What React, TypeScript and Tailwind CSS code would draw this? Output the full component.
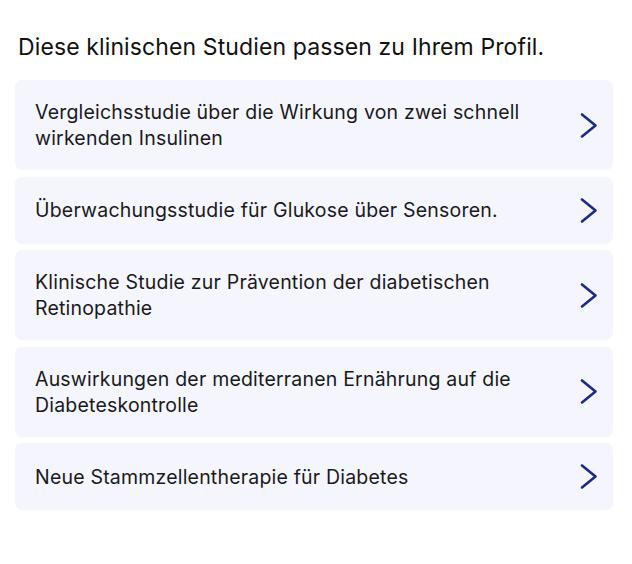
import React from "react";

const studies = [
  "Vergleichsstudie über die Wirkung von zwei schnell wirkenden Insulinen",
  "Überwachungsstudie für Glukose über Sensoren.",
  "Klinische Studie zur Prävention der diabetischen Retinopathie",
  "Auswirkungen der mediterranen Ernährung auf die Diabeteskontrolle",
  "Neue Stammzellentherapie für Diabetes",
];

function Chevron() {
  return (
    <svg width="31" height="29" viewBox="0 0 31 29" fill="none" className="shrink-0">
      <path d="M9 3.5 L22.5 14.5 L9 25.5" stroke="#1c2a86" strokeWidth="2.6" strokeLinecap="round" strokeLinejoin="round" />
    </svg>
  );
}

export default function App() {
  return (
    <div className="w-[632px] h-[564px] bg-white pt-[33px] pl-[15px] pr-[19px]" style={{ fontFamily: "Inter, 'Noto Sans', sans-serif" }}>
      <h1 className="text-[23px] leading-[28px] tracking-[0.005em] text-[#111111] font-normal pl-[3px] mb-[19px]">
        Diese klinischen Studien passen zu Ihrem Profil.
      </h1>
      <div className="flex flex-col gap-[6.5px]">
        {studies.map((s) => (
          <div key={s} className="flex items-center justify-between bg-[#f4f5fd] rounded-[8px] pl-[20px] pr-[9px] py-[19px] shadow-[0_0_2px_rgba(0,0,0,0.03)]">
            <span className="text-[19.5px] leading-[26px] tracking-[0.01em] text-[#1a1a1a] pr-[40px]">{s}</span>
            <Chevron />
          </div>
        ))}
      </div>
    </div>
  );
}
